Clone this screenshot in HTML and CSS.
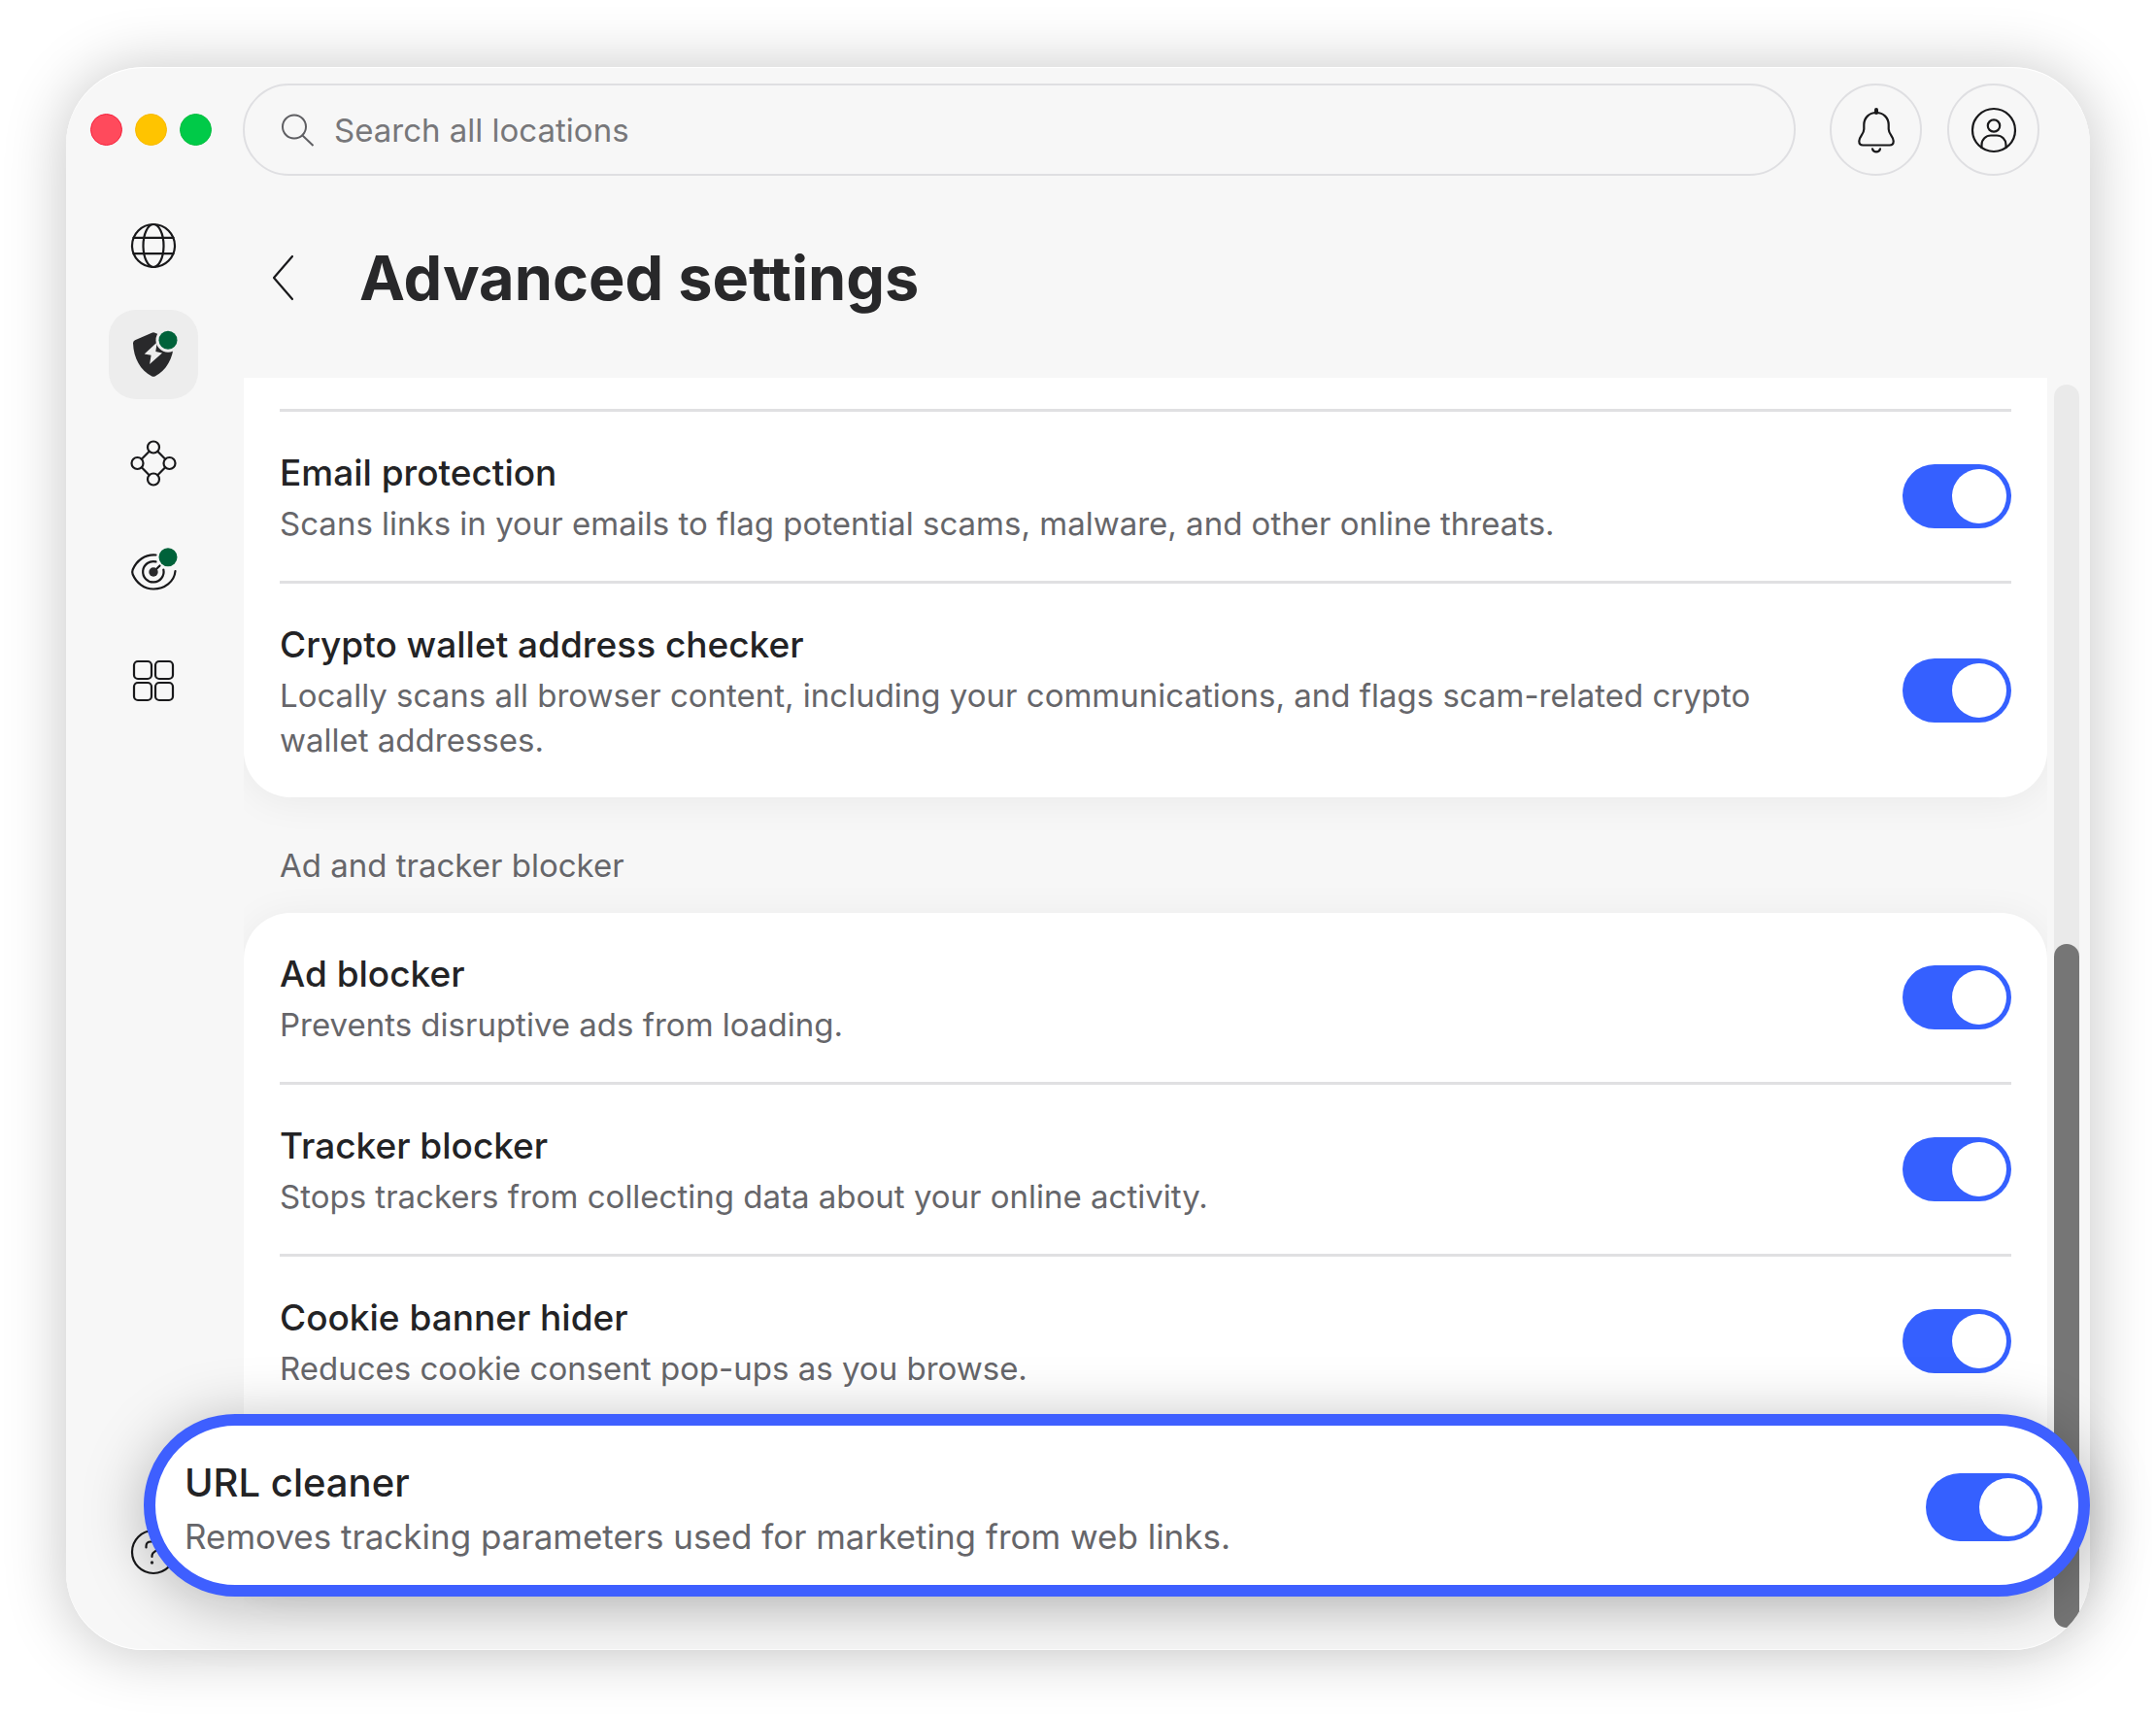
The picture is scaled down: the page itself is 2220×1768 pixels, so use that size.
FILE: index.html
```html
<!DOCTYPE html>
<html lang="en">
<head>
    <meta charset="UTF-8">
    <meta name="viewport" content="width=device-width, initial-scale=1.0">
    <title>Advanced settings</title>
    <link rel="stylesheet" href="styles.css">
</head>
<body>
    <div class="frame">
        <div class="window">
            <header class="topbar">
                <div class="lights">
                    <span class="light red"></span>
                    <span class="light yellow"></span>
                    <span class="light green"></span>
                </div>
                <label class="search">
                    <svg class="search-icon" viewBox="0 0 34 34"><circle cx="13" cy="13.5" r="12"/><path d="M21.5 22.5L32.5 33"/></svg>
                    <input type="search" placeholder="Search all locations" aria-label="Search all locations">
                </label>
                <div class="actions">
                    <button class="round" aria-label="Notifications">
                        <svg class="icon" viewBox="0 0 46 46">
                            <path d="M23 5C15.5 5 10.3 10.5 10.3 17.5V22c0 5-5 7.5-5 12.2 0 2.6 1.6 4.3 4 4.3h27.4c2.4 0 4-1.7 4-4.3 0-4.7-5-7.2-5-12.2v-4.5C35.7 10.5 30.5 5 23 5z"/>
                            <path class="thick" d="M23 2v3"/>
                            <path d="M19 42.3c.6 1.9 2.1 3 4 3s3.4-1.1 4-3"/>
                        </svg>
                    </button>
                    <button class="round" aria-label="Account">
                        <svg class="icon" viewBox="0 0 46 46">
                            <circle cx="23" cy="23" r="22"/>
                            <circle cx="23" cy="18.5" r="6.2"/>
                            <path d="M10.5 41V38a9.5 9.5 0 0 1 9.5-9.5h6a9.5 9.5 0 0 1 9.5 9.5v3"/>
                        </svg>
                    </button>
                </div>
            </header>

            <div class="body">
                <nav class="sidebar">
                    <button class="nav-item" aria-label="Locations">
                        <svg class="icon" viewBox="0 0 46 46">
                            <circle cx="23" cy="23" r="22"/>
                            <ellipse cx="23" cy="23" rx="10.5" ry="22"/>
                            <path d="M2.5 14.8h41M2.5 31.2h41"/>
                        </svg>
                    </button>
                    <button class="nav-item active" aria-label="Threat protection">
                        <svg class="icon" viewBox="0 0 46 46">
                            <path class="solid" d="M21.3.7q1.7-.9 3.4 0L42 8.2q2 .9 2 3C43.5 27 36 39.5 25 45.3q-2 1.1-4 0C10 39.5 2.500 27 2 11.2q0-2.1 2-3z"/>
                            <path class="bolt" d="M26.7 10.5L13.7 22.5l6.9 1.2-1.5 9.3L32 21.5l-6.7-1.5z"/>
                            <circle class="dot-ring" cx="38" cy="8.2" r="12.5"/>
                            <circle class="dot" cx="38" cy="8.2" r="9.5"/>
                        </svg>
                    </button>
                    <button class="nav-item" aria-label="Meshnet">
                        <svg class="icon" viewBox="0 0 46 46">
                            <circle cx="23" cy="6.5" r="6"/>
                            <circle cx="6.5" cy="23" r="6"/>
                            <circle cx="39.5" cy="23" r="6"/>
                            <circle cx="23" cy="39.5" r="6"/>
                            <path d="M18.7 10.8l-7.9 7.9M27.3 10.8l7.9 7.9M10.8 27.3l7.9 7.9M35.2 27.3l-7.9 7.9"/>
                        </svg>
                    </button>
                    <button class="nav-item" aria-label="Dark web monitor">
                        <svg class="icon" viewBox="0 0 46 46">
                            <path d="M25.5 5.5C14 4.5 5.5 11.5 1.7 20.5q-1 2.5 0 5C5.5 34.5 13.5 40.5 23 40.5c11.5 0 21.5-7.5 22.5-18.5"/>
                            <path d="M25.5 12.4A10.7 10.7 0 1 0 33.3 20.5"/>
                            <path d="M23 23l6.500-6.500"/>
                            <circle class="solid" cx="23" cy="23" r="4.7"/>
                            <circle class="dot" cx="38" cy="7.7" r="9.5"/>
                        </svg>
                    </button>
                    <button class="nav-item" aria-label="More products">
                        <svg class="icon" viewBox="0 0 46 46">
                            <rect x="3" y="3" width="18" height="18" rx="4"/>
                            <rect x="25" y="3" width="18" height="18" rx="4"/>
                            <rect x="3" y="25" width="18" height="18" rx="4"/>
                            <rect x="25" y="25" width="18" height="18" rx="4"/>
                        </svg>
                    </button>
                    <button class="nav-item help" aria-label="Help">
                        <svg class="icon" viewBox="0 0 46 46">
                            <circle cx="23" cy="23" r="22"/>
                            <path d="M15.5 18.5v-1.5c0-2.8 2-4.5 4.8-4.5h3.4c3 0 5.3 1.7 5.3 4.7 0 5-7.5 4.3-7.5 9.8v1"/>
                            <circle class="solid" cx="21.5" cy="34" r="1.7"/>
                        </svg>
                    </button>
                </nav>

                <main class="main">
                    <div class="page-head">
                        <button class="back" aria-label="Back">
                            <svg class="icon" viewBox="0 0 46 46"><path d="M33 1L14 23l19 22"/></svg>
                        </button>
                        <h1>Advanced settings</h1>
                    </div>

                    <div class="scroller">
                        <div class="content">
                            <section class="card card-cut">
                                <label class="row">
                                    <span class="text">
                                        <span class="name">Email protection</span>
                                        <span class="desc">Scans links in your emails to flag potential scams, malware, and other online threats.</span>
                                    </span>
                                    <input type="checkbox" role="switch" class="switch" checked>
                                </label>
                                <label class="row">
                                    <span class="text">
                                        <span class="name">Crypto wallet address checker</span>
                                        <span class="desc">Locally scans all browser content, including your communications, and flags scam-related crypto wallet addresses.</span>
                                    </span>
                                    <input type="checkbox" role="switch" class="switch" checked>
                                </label>
                            </section>

                            <h2>Ad and tracker blocker</h2>

                            <section class="card card-last">
                                <label class="row">
                                    <span class="text">
                                        <span class="name">Ad blocker</span>
                                        <span class="desc">Prevents disruptive ads from loading.</span>
                                    </span>
                                    <input type="checkbox" role="switch" class="switch" checked>
                                </label>
                                <label class="row">
                                    <span class="text">
                                        <span class="name">Tracker blocker</span>
                                        <span class="desc">Stops trackers from collecting data about your online activity.</span>
                                    </span>
                                    <input type="checkbox" role="switch" class="switch" checked>
                                </label>
                                <label class="row">
                                    <span class="text">
                                        <span class="name">Cookie banner hider</span>
                                        <span class="desc">Reduces cookie consent pop-ups as you browse.</span>
                                    </span>
                                    <input type="checkbox" role="switch" class="switch" checked>
                                </label>
                            </section>
                        </div>
                        <div class="scrollbar"><div class="thumb"></div></div>
                    </div>
                </main>
            </div>
        </div>

        <!-- enlarged row, floats over the window -->
        <label class="callout">
            <span class="text">
                <span class="name">URL cleaner</span>
                <span class="desc">Removes tracking parameters used for marketing from web links.</span>
            </span>
            <input type="checkbox" role="switch" class="switch switch-lg" checked>
        </label>
    </div>
</body>
</html>
```
FILE: styles.css
```css
:root {
    --bg: #f7f7f7;
    --ink: #232325;
    --muted: #66666a;
    --line: #e0e0e2;
    --blue: #3560ff;
    --green: #00623a;
}

* {
    margin: 0;
    padding: 0;
    box-sizing: border-box;
}

body {
    background: #fff;
    color: var(--ink);
    font-family: Inter, "Liberation Sans", sans-serif;
    padding: 69px 68px;
}

button {
    border: none;
    background: none;
    color: inherit;
    cursor: pointer;
}

.frame {
    position: relative;
}

.window {
    background: var(--bg);
    border-radius: 80px;
    overflow: hidden;
    box-shadow: 0 2px 64px rgba(0, 0, 0, 0.23), inset 0 1px #fff, inset 0 -1px #fff;
}

.icon {
    display: block;
    width: 46px;
    height: 46px;
    overflow: visible;
    fill: none;
    stroke: #19191b;
    stroke-width: 2.2;
    stroke-linecap: round;
    stroke-linejoin: round;
}

.icon .thick {
    stroke-width: 4;
}

.icon .solid {
    fill: #29292b;
    stroke: none;
}

.icon .bolt,
.icon .dot-ring {
    fill: #ededed;
    stroke: none;
}

.icon .dot {
    fill: var(--green);
    stroke: none;
}

/* Top bar */
.topbar {
    display: flex;
    align-items: center;
    padding: 17px 52px 0 25px;
}

.lights {
    display: flex;
    gap: 13px;
    margin-right: 32px;
}

.light {
    width: 33px;
    height: 33px;
    border-radius: 50%;
    border: 1px solid;
}

.red { background: #ff4a5c; border-color: #f5213c; }
.yellow { background: #ffc400; border-color: #f8b800; }
.green { background: #00ca48; border-color: #00bd3c; }

.search {
    flex: 1;
    display: flex;
    align-items: center;
    gap: 20px;
    height: 95px;
    padding: 0 38px;
    border: 2px solid #dfdfe2;
    border-radius: 48px;
    margin-right: 35px;
}

.search-icon {
    width: 34px;
    height: 34px;
    fill: none;
    stroke: #5f5f63;
    stroke-width: 2;
}

.search input {
    flex: 1;
    border: none;
    outline: none;
    background: none;
    font: inherit;
    font-size: 33px;
    color: var(--ink);
}

.search input::placeholder {
    color: #77777a;
    opacity: 1;
}

.actions {
    display: flex;
    gap: 26px;
}

.round {
    display: flex;
    align-items: center;
    justify-content: center;
    width: 95px;
    height: 95px;
    border: 2px solid #dfdfe2;
    border-radius: 50%;
}

.body {
    display: flex;
}

/* Sidebar */
.sidebar {
    display: flex;
    flex-direction: column;
    gap: 20px;
    padding: 26px 47px 55px 44px;
}

.nav-item {
    display: flex;
    align-items: center;
    justify-content: center;
    width: 92px;
    height: 92px;
    border-radius: 28px;
}

.nav-item.active {
    background: #ededed;
}

.nav-item.help {
    margin-top: auto;
}

/* Main column */
.main {
    flex: 1;
    min-width: 0;
}

.page-head {
    display: flex;
    align-items: center;
    gap: 56px;
    height: 208px;
    padding: 2px 0 0 17px;
}

h1 {
    font-size: 63px;
    line-height: 80px;
    font-weight: 700;
    color: #28282a;
}

h2 {
    padding: 47px 37px 26px;
    font-size: 33px;
    line-height: 46px;
    font-weight: 400;
    color: var(--muted);
}

.scroller {
    display: flex;
}

.content {
    flex: 1;
    min-width: 0;
    overflow: hidden;
    padding-bottom: 55px;
}

.card {
    background: #fff;
    border-radius: 48px;
    padding: 0 37px;
    box-shadow: 0 4px 40px rgba(0, 0, 0, 0.06);
}

.card-cut {
    border-radius: 0 0 48px 48px;
    padding-top: 32px;
}

/* room for the row that the callout covers */
.card-last {
    padding-bottom: 176px;
}

.row {
    display: flex;
    align-items: center;
    justify-content: space-between;
    gap: 140px;
    padding: 36px 0;
}

.row + .row,
.card-cut .row {
    border-top: 3px solid var(--line);
}

.name,
.desc {
    display: block;
}

.name {
    margin-bottom: 2px;
    font-size: 37px;
    line-height: 54px;
    font-weight: 500;
}

.desc {
    font-size: 33px;
    line-height: 46px;
    color: var(--muted);
}

.switch {
    appearance: none;
    flex: none;
    display: flex;
    align-items: center;
    width: 112px;
    height: 66px;
    padding: 5px;
    border-radius: 33px;
    background: #b9b9bd;
    cursor: pointer;
}

.switch::before {
    content: '';
    height: 100%;
    aspect-ratio: 1;
    border-radius: 50%;
    background: #fff;
}

.switch:checked {
    justify-content: flex-end;
    background: var(--blue);
}

.switch-lg {
    width: 120px;
    height: 70px;
    border-radius: 35px;
}

.scrollbar {
    display: flex;
    flex-direction: column;
    justify-content: flex-end;
    width: 26px;
    margin: 7px 11px 23px 7px;
    border-radius: 13px;
    background: #eaeaea;
}

.thumb {
    height: 55%;
    border-radius: 13px;
    background: #767676;
}

/* Callout */
.callout {
    position: absolute;
    left: 80px;
    right: 0;
    bottom: 55px;
    display: flex;
    align-items: center;
    justify-content: space-between;
    padding: 29px 37px 25px 30px;
    border: 12px solid #3e5fff;
    border-radius: 94px;
    background: #fff;
    box-shadow: 0 8px 64px rgba(0, 0, 0, 0.27);
}

.callout .name {
    margin-bottom: 0;
    font-size: 40px;
    line-height: 60px;
}

.callout .desc {
    font-size: 35px;
    line-height: 50px;
}
```
